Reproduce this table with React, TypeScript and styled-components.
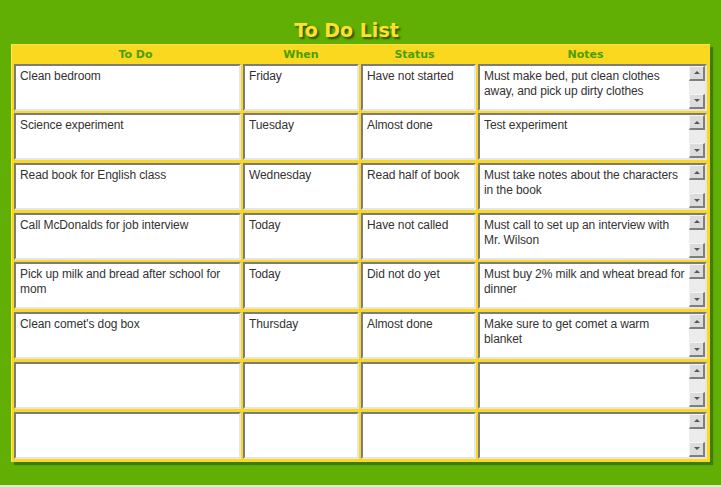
import React from "react";
import styled, { createGlobalStyle } from "styled-components";

const Global = createGlobalStyle`
  html, body { margin: 0; padding: 0; background: #dcefc4; }
  body { font-family: "Liberation Sans", Arial, sans-serif; }
`;

const Page = styled.div`
  width: 721px;
  height: 485px;
  background: #61af05;
  display: flex;
  flex-direction: column;
`;

const Title = styled.h1`
  margin: 0;
  height: 44px;
  box-sizing: border-box;
  padding: 18px 28px 0 0;
  text-align: center;
  font-family: "DejaVu Sans", Verdana, sans-serif;
  font-weight: bold;
  font-size: 19px;
  line-height: 24px;
  color: #fde12a;
  text-shadow: 2px 2px 2px #2f5200;
  overflow: visible;
`;

const Panel = styled.div`
  margin-left: 11px;
  width: 699px;
  box-sizing: border-box;
  padding: 0 3px 3px 2px;
  background: #fad81f;
  border-top: 1px solid #fde047;
  border-left: 1px solid #ffe95e;
  box-shadow: 3px 3px 1px #3f7d00;
  display: grid;
  grid-template-columns: 227px 116px 115px 229px;
  column-gap: 2px;
  row-gap: 2.7px;
`;

const Head = styled.div<{ $shift?: number }>`
  height: 16px;
  line-height: 20px;
  text-align: center;
  font-family: "DejaVu Sans", Verdana, sans-serif;
  font-weight: bold;
  font-size: 11px;
  color: #4a9e00;
  position: relative;
  left: ${(p) => p.$shift ?? 0}px;
`;

const Cell = styled.div`
  height: 47px;
  box-sizing: border-box;
  background: #ffffff;
  border-top: 2px solid #7c7c7c;
  border-left: 2px solid #7c7c7c;
  border-bottom: 2px solid #e6e6e6;
  border-right: 2px solid #e6e6e6;
  display: flex;
  font-family: "Liberation Sans", Arial, sans-serif;
  font-size: 12px;
  line-height: 15px;
  letter-spacing: -0.1px;
  color: #333333;
`;

const CellText = styled.div`
  flex: 1;
  padding: 3px 2px 0 4px;
`;

const ScrollBar = styled.div`
  width: 16px;
  flex: none;
  display: flex;
  flex-direction: column;
  background: #ececec;
  justify-content: space-between;
`;

const ScrollButton = styled.div<{ $dir: "up" | "down" }>`
  width: 16px;
  height: 15px;
  box-sizing: border-box;
  background: #dcdcdc;
  border-top: 1px solid #f4f4f4;
  border-left: 1px solid #f4f4f4;
  border-right: 2px solid #7e7e7e;
  border-bottom: 2px solid #7e7e7e;
  display: flex;
  align-items: center;
  justify-content: center;
  &::after {
    content: "";
    width: 0;
    height: 0;
    border-left: 3px solid transparent;
    border-right: 3px solid transparent;
    ${(p) =>
      p.$dir === "up"
        ? "border-bottom: 3px solid #555;"
        : "border-top: 3px solid #555;"}
  }
`;

type Row = { todo: string; when: string; status: string; notes: string };

const rows: Row[] = [
  { todo: "Clean bedroom", when: "Friday", status: "Have not started", notes: "Must make bed, put clean clothes away, and pick up dirty clothes" },
  { todo: "Science experiment", when: "Tuesday", status: "Almost done", notes: "Test experiment" },
  { todo: "Read book for English class", when: "Wednesday", status: "Read half of book", notes: "Must take notes about the characters in the book" },
  { todo: "Call McDonalds for job interview", when: "Today", status: "Have not called", notes: "Must call to set up an interview with Mr. Wilson" },
  { todo: "Pick up milk and bread after school for mom", when: "Today", status: "Did not do yet", notes: "Must buy 2% milk and wheat bread for dinner" },
  { todo: "Clean comet's dog box", when: "Thursday", status: "Almost done", notes: "Make sure to get comet a warm blanket" },
  { todo: "", when: "", status: "", notes: "" },
  { todo: "", when: "", status: "", notes: "" },
];

export default function App() {
  return (
    <>
      <Global />
      <Page>
        <Title>To Do List</Title>
        <Panel>
          <Head $shift={8}>To Do</Head>
          <Head>When</Head>
          <Head $shift={-4}>Status</Head>
          <Head $shift={-7}>Notes</Head>
          {rows.map((r, i) => (
            <React.Fragment key={i}>
              <Cell><CellText>{r.todo}</CellText></Cell>
              <Cell><CellText>{r.when}</CellText></Cell>
              <Cell><CellText>{r.status}</CellText></Cell>
              <Cell>
                <CellText>{r.notes}</CellText>
                <ScrollBar>
                  <ScrollButton $dir="up" />
                  <ScrollButton $dir="down" />
                </ScrollBar>
              </Cell>
            </React.Fragment>
          ))}
        </Panel>
      </Page>
    </>
  );
}
